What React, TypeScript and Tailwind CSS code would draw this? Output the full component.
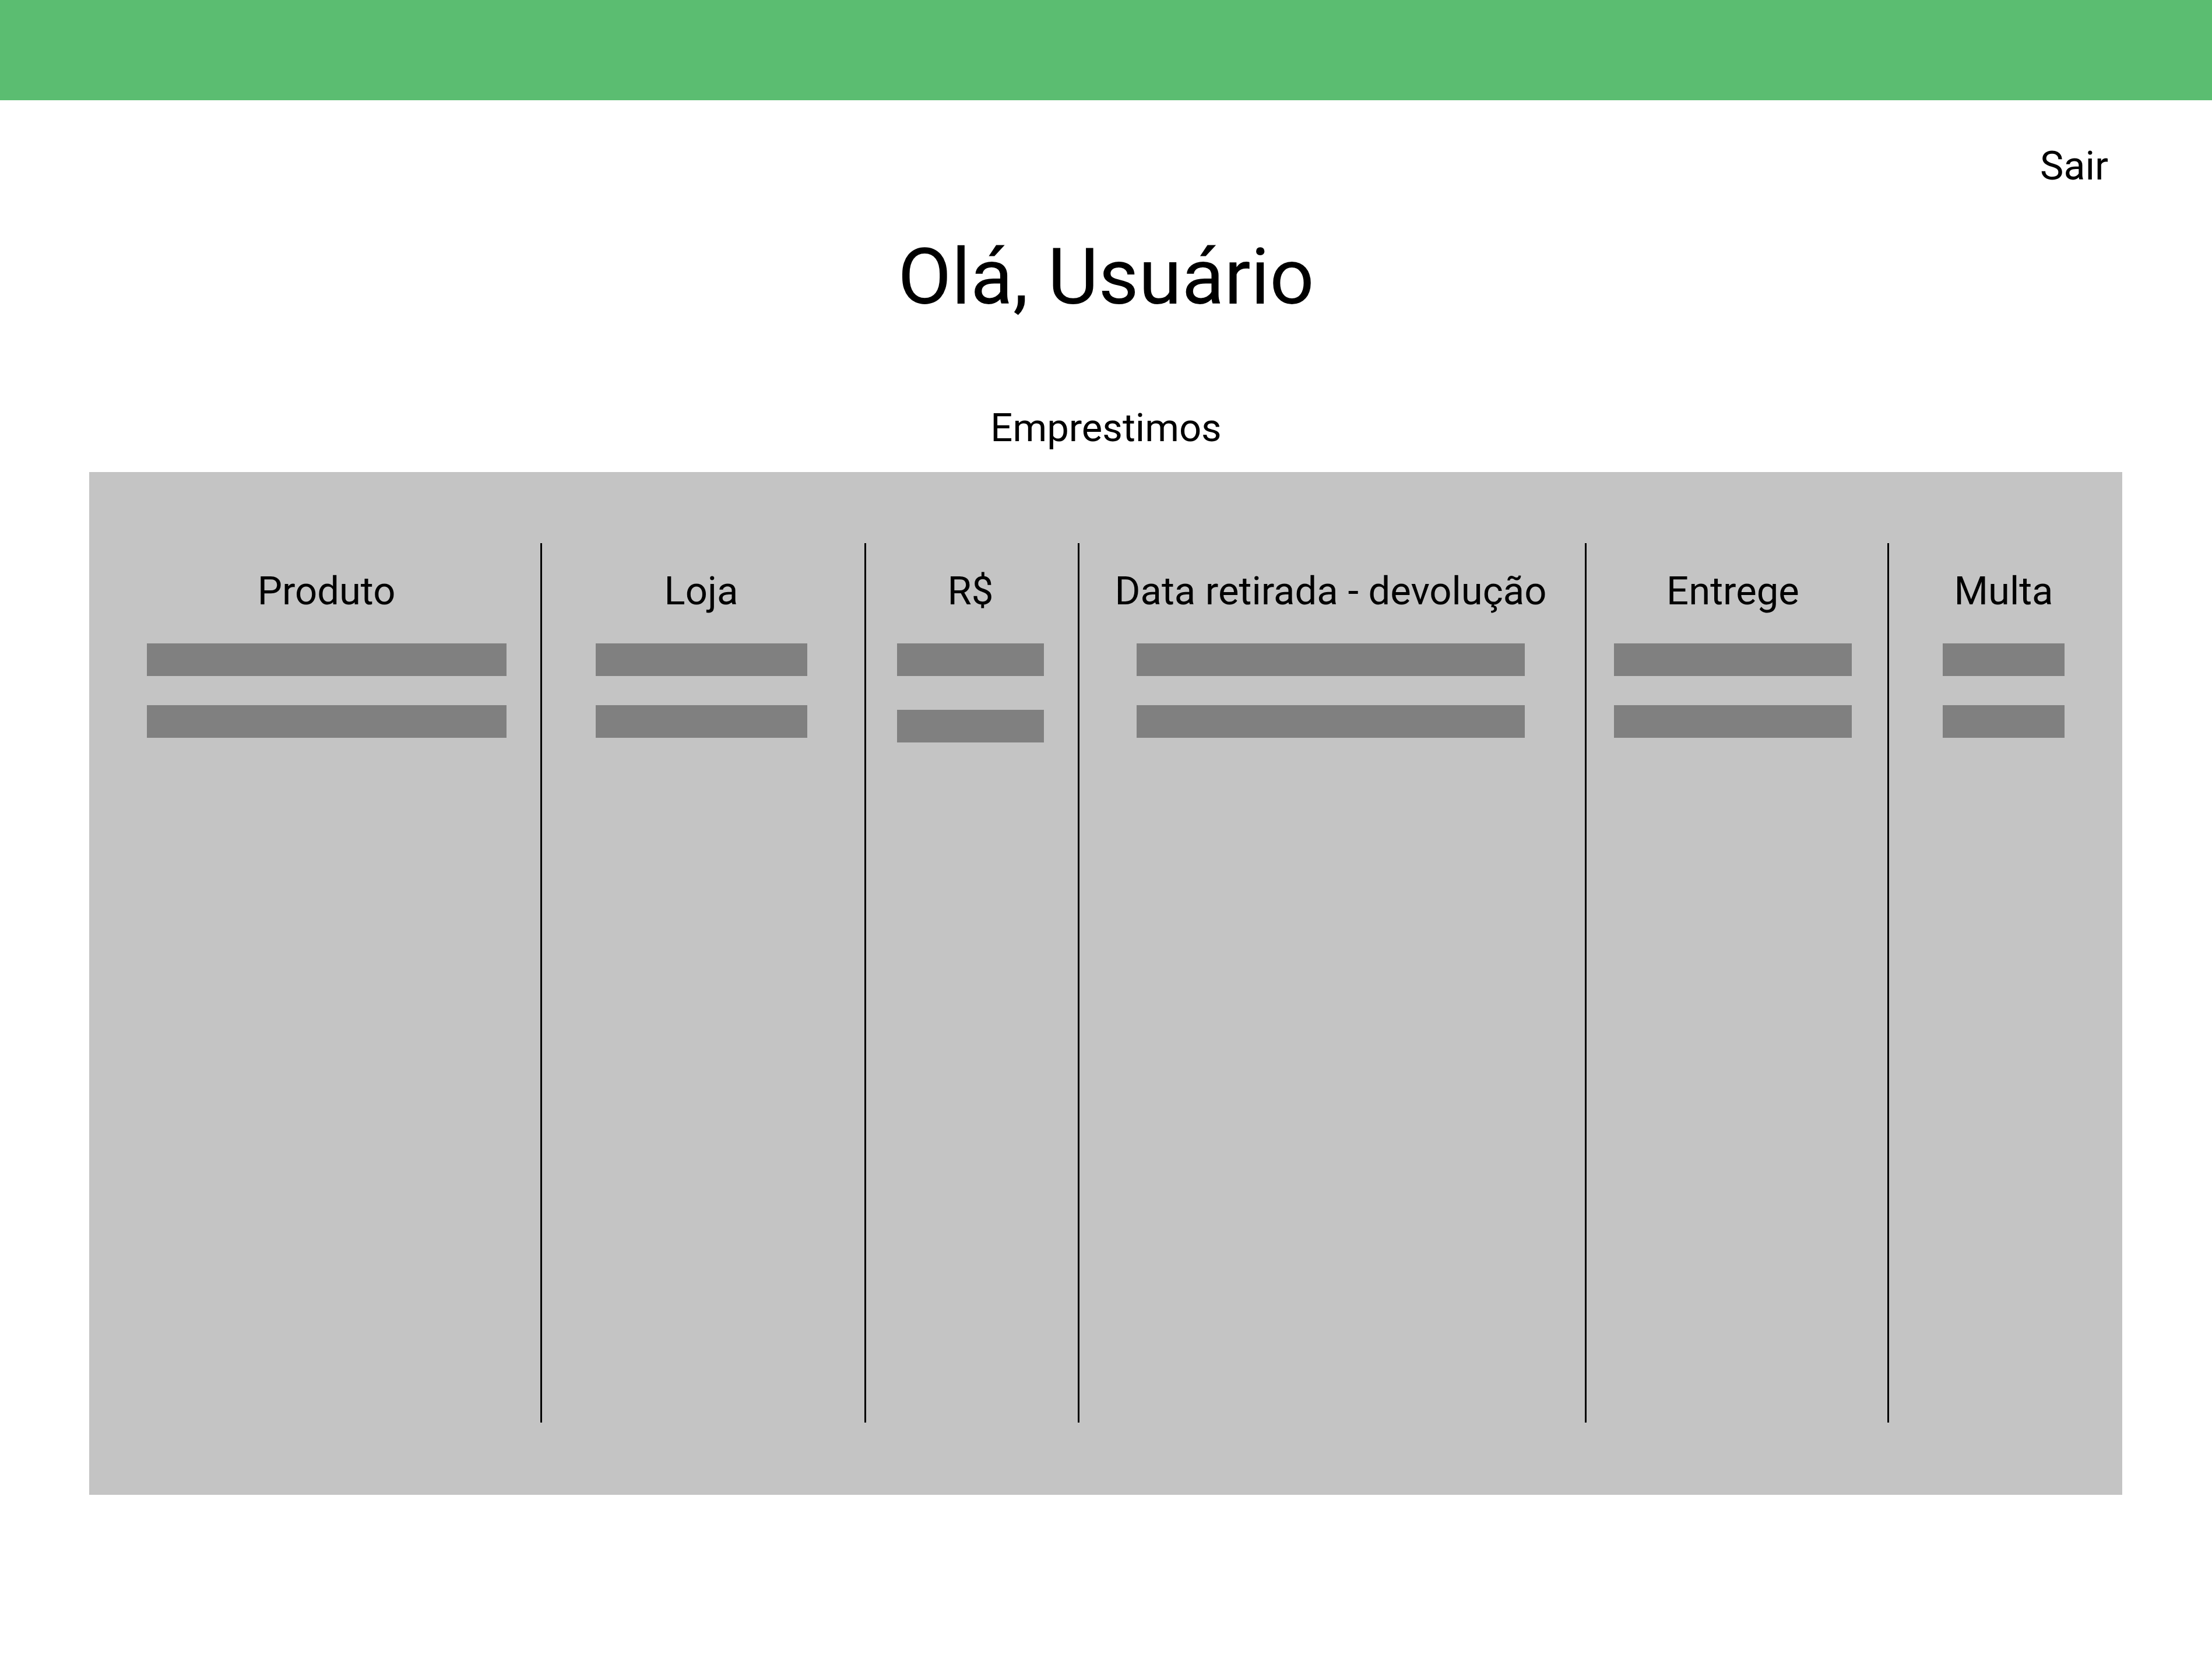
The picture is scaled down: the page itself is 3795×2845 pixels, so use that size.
import React from 'react';

// Tela "Olá, Usuário" – lista de empréstimos (wireframe)

type Col = { title: string; width: string; bar: string; pad: string; secondBarGap?: string };

const cols: Col[] = [
    { title: 'Produto', width: 'w-[774px]', bar: 'w-[617px]', pad: 'pl-[40px]' },
    { title: 'Loja', width: 'w-[556px]', bar: 'w-[363px]', pad: 'pr-[7px] border-l-[3px] border-black' },
    { title: 'R$', width: 'w-[366px]', bar: 'w-[252px]', pad: 'pr-[5px] border-l-[3px] border-black', secondBarGap: 'mt-[58px]' },
    { title: 'Data retirada - devolução', width: 'w-[870px]', bar: 'w-[666px]', pad: 'pr-[5px] border-l-[3px] border-black' },
    { title: 'Entrege', width: 'w-[519px]', bar: 'w-[408px]', pad: 'pr-[14px] border-l-[3px] border-black' },
    { title: 'Multa', width: 'flex-1', bar: 'w-[209px]', pad: 'pr-[7px] border-l-[3px] border-black' },
];

function Column({ col }: { col: Col }) {
    return (
        <div className={`${col.width} ${col.pad} h-full flex flex-col items-center shrink-0`}>
            <div className="mt-[49px] text-[67px] leading-none whitespace-nowrap">{col.title}</div>
            <div className={`${col.bar} h-[56px] bg-[#808080] mt-[56px]`} />
            <div className={`${col.bar} h-[56px] bg-[#808080] ${col.secondBarGap ?? 'mt-[50px]'}`} />
        </div>
    );
}

export default function App() {
    return (
        <div className="w-[3795px] h-[2845px] bg-white text-black font-['Roboto',sans-serif]">
            <div className="h-[172px] bg-[#5bbd71]" />

            <div className="flex justify-end pr-[178px] mt-[79px]">
                <span className="text-[68px] leading-none">Sair</span>
            </div>

            <h1 className="mt-[90px] text-center text-[134px] leading-none">Olá, Usuário</h1>

            <div className="mt-[158px] text-center text-[67px] leading-none">Emprestimos</div>

            {/* tabela */}
            <div className="ml-[153px] mt-[42px] w-[3488px] h-[1755px] bg-[#c4c4c4] pt-[122px] pb-[124px]">
                <div className="flex h-full">
                    {cols.map((c) => (
                        <Column key={c.title} col={c} />
                    ))}
                </div>
            </div>
        </div>
    );
}
